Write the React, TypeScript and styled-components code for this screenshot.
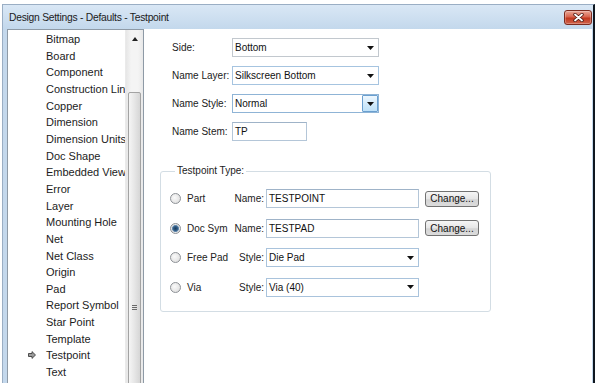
import { Fragment } from "react";
import styled, { createGlobalStyle } from "styled-components";

const GlobalStyle = createGlobalStyle`
  html, body {
    margin: 0;
    padding: 0;
    background: #ffffff;
  }
  body {
    font-family: "Liberation Sans", Arial, sans-serif;
    color: #1e1e1e;
  }
`;

const Page = styled.div`
  width: 600px;
  height: 383px;
  overflow: hidden;
  padding: 4px 0 0 2px;
  box-sizing: border-box;
`;

const Window = styled.div`
  width: 593px;
  height: 400px;
  display: flex;
  flex-direction: column;
  box-sizing: border-box;
  background: #c4d8ec;
  border-left: 1px solid #9aaec4;
  border-top: 1px solid #9aaec4;
  border-right: 2px solid #0f1720;
`;

const TitleBar = styled.div`
  height: 24px;
  flex: none;
  display: flex;
  align-items: center;
  justify-content: space-between;
  padding: 0 1px 0 6px;
  background: linear-gradient(#d9e7f5, #c3d8ec);
`;

const Title = styled.span`
  font-size: 10.3px;
  letter-spacing: -0.25px;
  color: #1b1b1b;
`;

const CloseButton = styled.div`
  width: 28px;
  height: 15px;
  box-sizing: border-box;
  display: flex;
  align-items: center;
  justify-content: center;
  border: 1px solid #7c2b1f;
  border-radius: 3px;
  background: linear-gradient(#eaa898, #d8644e 45%, #c2381f 55%, #d0644c);
  box-shadow: inset 0 0 0 1px rgba(255, 255, 255, 0.25);
`;

const Client = styled.div`
  flex: 1;
  min-height: 0;
  display: flex;
  padding: 0 1px 0 4px;
`;

const Tree = styled.div`
  width: 137px;
  flex: none;
  display: flex;
  box-sizing: border-box;
  border: 1px solid #8e9aa6;
  background: #ffffff;
`;

const TreeList = styled.ul`
  flex: 1;
  min-width: 0;
  list-style: none;
  margin: 0;
  padding: 0.67px 0 0;
  overflow: hidden;
`;

const TreeItem = styled.li`
  display: flex;
  align-items: center;
  height: 16.67px;
  padding-left: 20px;
  font-size: 11px;
  white-space: nowrap;
  color: #1c1c1c;
`;

const ItemMark = styled.span`
  width: 18px;
  flex: none;
  display: flex;
  align-items: center;
`;

const ScrollBar = styled.div`
  width: 17px;
  flex: none;
  display: flex;
  flex-direction: column;
  align-items: center;
  background: linear-gradient(90deg, #e6e6e6, #f4f4f4 30%, #f4f4f4 70%, #e8e8e8);
  border-left: 1px solid #eaeaea;
`;

const ScrollArrow = styled.div`
  height: 17px;
  flex: none;
  display: flex;
  align-items: center;
  justify-content: center;
`;

const Thumb = styled.div`
  width: 13px;
  height: 440px;
  margin-top: 45px;
  flex: none;
  box-sizing: border-box;
  display: flex;
  flex-direction: column;
  align-items: center;
  border: 1px solid #a3a3a3;
  border-radius: 2px;
  background: linear-gradient(90deg, #f5f5f5, #e6e6e6 50%, #d6d6d6);
`;

const Grip = styled.div`
  margin-top: 212px;
  width: 5px;
  display: flex;
  flex-direction: column;
  gap: 1px;

  span {
    height: 1px;
    background: #6a6a6a;
  }
`;

const Content = styled.div`
  flex: 1;
  background: #ffffff;
  padding: 9px 0 0 16px;
  display: flex;
  flex-direction: column;
  align-items: flex-start;
`;

const FormGrid = styled.div`
  display: grid;
  grid-template-columns: 60px 147px;
  grid-auto-rows: 19px;
  row-gap: 9px;
  align-items: center;
  padding-left: 12px;
`;

const Label = styled.span`
  font-size: 10px;
  color: #222;
  white-space: nowrap;
`;

const Combo = styled.div<{ $border?: string; $width?: number }>`
  width: ${({ $width }) => ($width ? `${$width}px` : "100%")};
  height: 19px;
  box-sizing: border-box;
  display: flex;
  align-items: center;
  justify-content: space-between;
  border: 1px solid ${({ $border }) => $border ?? "#c2c8ce"};
  background: #ffffff;
  padding-left: 2px;
  font-size: 10px;
  color: #111;
`;

const ComboArrow = styled.div<{ $button?: boolean }>`
  width: 16px;
  height: 100%;
  box-sizing: border-box;
  display: flex;
  align-items: center;
  justify-content: center;
  ${({ $button }) =>
    $button &&
    `
    border: 1px solid #6a9fcf;
    border-radius: 1px;
    background: linear-gradient(#eef7fe, #d3ebfb 50%, #bfe1f8);
  `}
`;

const TextBox = styled.div<{ $width?: number }>`
  width: ${({ $width }) => ($width ? `${$width}px` : "100%")};
  height: 19px;
  box-sizing: border-box;
  display: flex;
  align-items: center;
  padding-left: 2px;
  border: 1px solid #b4c6d8;
  border-top-color: #9fb3c8;
  background: #ffffff;
  font-size: 10px;
  color: #111;
`;

const GroupBox = styled.fieldset`
  margin: 24px 0 0;
  width: 331px;
  box-sizing: border-box;
  border: 1px solid #d3dde4;
  border-radius: 3px;
  padding: 12px 0 14px 9px;
`;

const Legend = styled.legend`
  margin-left: 5px;
  padding: 0 2px;
  font-size: 10px;
  line-height: 12px;
  color: #222;
`;

const TypeGrid = styled.div`
  display: grid;
  grid-template-columns: 60px 36px 153px 60px;
  grid-auto-rows: 19px;
  row-gap: 10.5px;
  align-items: center;
`;

const RadioLabel = styled.label`
  display: flex;
  align-items: center;
  gap: 6px;
  font-size: 10px;
  color: #222;
  white-space: nowrap;
`;

const Radio = styled.span<{ $checked?: boolean }>`
  width: 11px;
  height: 11px;
  box-sizing: border-box;
  border-radius: 50%;
  border: 1px solid #8d9196;
  background: ${({ $checked }) =>
    $checked
      ? "radial-gradient(circle, #1d3d5e 0, #2f5a82 2px, #6a8fb2 3.2px, #e9e9e9 3.8px, #d8d8d8)"
      : "radial-gradient(circle at 40% 40%, #fafafa, #d9d9d9)"};
`;

const FieldLabel = styled.span`
  font-size: 10px;
  color: #222;
  text-align: right;
  padding-right: 2px;
`;

const PushButton = styled.div`
  justify-self: end;
  width: 54px;
  height: 16px;
  box-sizing: border-box;
  display: flex;
  align-items: center;
  justify-content: center;
  border: 1px solid #727272;
  border-radius: 3px;
  background: linear-gradient(#f6f6f6, #e6e6e6 50%, #d4d4d4 55%, #dcdcdc);
  font-size: 10px;
  color: #111;
`;

const DownArrow = () => (
  <svg width="7" height="4" viewBox="0 0 7 4">
    <path d="M0 0h7L3.5 4z" fill="#111" />
  </svg>
);

const treeItems = [
  "Bitmap",
  "Board",
  "Component",
  "Construction Lin",
  "Copper",
  "Dimension",
  "Dimension Units",
  "Doc Shape",
  "Embedded View",
  "Error",
  "Layer",
  "Mounting Hole",
  "Net",
  "Net Class",
  "Origin",
  "Pad",
  "Report Symbol",
  "Star Point",
  "Template",
  "Testpoint",
  "Text",
];

const typeRows = [
  { label: "Part", field: "Name:", value: "TESTPOINT", kind: "text" },
  { label: "Doc Sym", field: "Name:", value: "TESTPAD", kind: "text", checked: true },
  { label: "Free Pad", field: "Style:", value: "Die Pad", kind: "combo" },
  { label: "Via", field: "Style:", value: "Via (40)", kind: "combo" },
];

export default function App() {
  return (
    <Page>
      <GlobalStyle />
      <Window>
        <TitleBar>
          <Title>Design Settings - Defaults - Testpoint</Title>
          <CloseButton>
            <svg width="11" height="9" viewBox="0 0 11 9">
              <path d="M2 1.5l7 6M9 1.5l-7 6" stroke="#4a1610" strokeWidth="3.4" strokeLinecap="round" />
              <path d="M2 1.5l7 6M9 1.5l-7 6" stroke="#ffffff" strokeWidth="1.8" strokeLinecap="round" />
            </svg>
          </CloseButton>
        </TitleBar>
        <Client>
          <Tree>
            <TreeList>
              {treeItems.map((item) => (
                <TreeItem key={item}>
                  <ItemMark>
                    {item === "Testpoint" && (
                      <svg width="8" height="8" viewBox="0 0 8 8">
                        <path
                          d="M0.5 2.5h3.5V0.6L7.5 4 4 7.4V5.5H0.5z"
                          fill="#9c9c9c"
                          stroke="#404040"
                          strokeWidth="0.9"
                          strokeLinejoin="round"
                        />
                      </svg>
                    )}
                  </ItemMark>
                  {item}
                </TreeItem>
              ))}
            </TreeList>
            <ScrollBar>
              <ScrollArrow>
                <svg width="6" height="4" viewBox="0 0 6 4">
                  <path d="M0 4h6L3 0z" fill="#222" />
                </svg>
              </ScrollArrow>
              <Thumb>
                <Grip>
                  <span />
                  <span />
                  <span />
                </Grip>
              </Thumb>
            </ScrollBar>
          </Tree>
          <Content>
            <FormGrid>
              <Label>Side:</Label>
              <Combo>
                Bottom
                <ComboArrow>
                  <DownArrow />
                </ComboArrow>
              </Combo>
              <Label>Name Layer:</Label>
              <Combo $border="#a6c4e0">
                Silkscreen Bottom
                <ComboArrow>
                  <DownArrow />
                </ComboArrow>
              </Combo>
              <Label>Name Style:</Label>
              <Combo $border="#8fb4d6">
                Normal
                <ComboArrow $button>
                  <DownArrow />
                </ComboArrow>
              </Combo>
              <Label>Name Stem:</Label>
              <TextBox $width={75}>TP</TextBox>
            </FormGrid>
            <GroupBox>
              <Legend>Testpoint Type:</Legend>
              <TypeGrid>
                {typeRows.map((row) => (
                  <Fragment key={row.label}>
                    <RadioLabel>
                      <Radio $checked={row.checked} />
                      {row.label}
                    </RadioLabel>
                    <FieldLabel>{row.field}</FieldLabel>
                    {row.kind === "text" ? (
                      <TextBox>{row.value}</TextBox>
                    ) : (
                      <Combo $border="#a9c3dc">
                        {row.value}
                        <ComboArrow>
                          <DownArrow />
                        </ComboArrow>
                      </Combo>
                    )}
                    {row.kind === "text" ? <PushButton>Change...</PushButton> : <span />}
                  </Fragment>
                ))}
              </TypeGrid>
            </GroupBox>
          </Content>
        </Client>
      </Window>
    </Page>
  );
}
